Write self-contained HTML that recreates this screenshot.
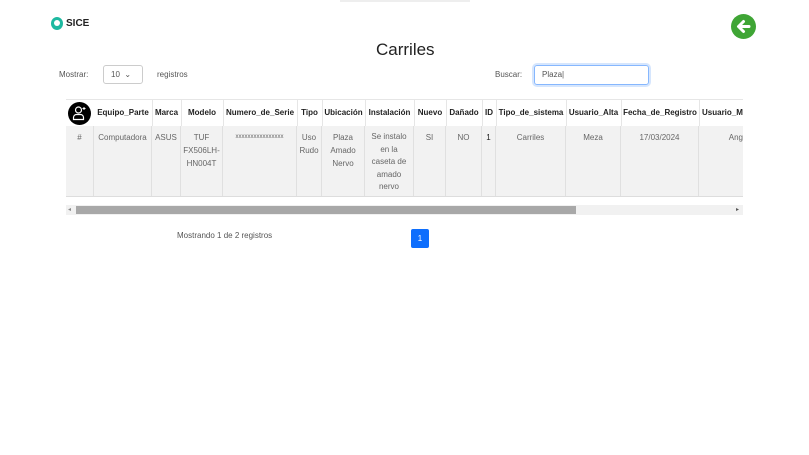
<!DOCTYPE html><html><head><style>
body{margin:0;width:809px;height:455px;background:#fff;font-family:"Liberation Sans",sans-serif;position:relative;overflow:hidden;color:#555}
.a{position:absolute}
.h{position:absolute;top:99px;height:27px;line-height:27px;font-weight:bold;font-size:8px;color:#222;text-align:center;white-space:nowrap;overflow:hidden;border-right:1px solid #e6e6e6}
.d{position:absolute;top:126px;height:70px;padding-top:5px;box-sizing:border-box;font-size:8px;line-height:13px;color:#666;text-align:center;background:#f2f2f2;border-right:1px solid #e0e0e0;overflow:hidden}
</style></head><body>
<div class="a" style="left:340px;top:0;width:130px;height:2px;background:#eee"></div>
<div class="a" style="left:51px;top:17px;width:12px;height:13px;border-radius:50%;background:#1db9a0"></div>
<div class="a" style="left:54px;top:20px;width:6px;height:6px;border-radius:50%;background:#fff"></div>
<div class="a" style="left:66px;top:18px;font-size:10px;font-weight:bold;color:#222">SICE</div>
<svg class="a" style="left:731px;top:14px" width="25" height="25" viewBox="0 0 25 25"><circle cx="12.5" cy="12.5" r="12.5" fill="#3fa535"/><path d="M18 12.5H8M12.5 7.5L7.5 12.5L12.5 17.5" stroke="#fff" stroke-width="3" fill="none" stroke-linecap="round" stroke-linejoin="round"/></svg>
<div class="a" style="left:376px;top:40px;font-size:17px;color:#222">Carriles</div>
<div class="a" style="left:59px;top:70px;font-size:8px">Mostrar:</div>
<div class="a" style="left:103px;top:65px;width:40px;height:19px;border:1px solid #ccc;border-radius:3px;box-sizing:border-box;font-size:8px;line-height:17px;padding-left:7px">10 &nbsp;⌄</div>
<div class="a" style="left:157px;top:70px;font-size:8px">registros</div>
<div class="a" style="left:495px;top:70px;font-size:8px">Buscar:</div>
<div class="a" style="left:534px;top:65px;width:115px;height:20px;border:1px solid #86b7fe;border-radius:3px;box-shadow:0 0 0 2px #d6e6fd;box-sizing:border-box;font-size:8px;line-height:18px;padding-left:7px">Plaza|</div>
<div class="a" style="left:66px;top:99px;width:677px;height:1px;background:#e6e6e6"></div>
<div class="a" style="left:66px;top:196px;width:677px;height:1px;background:#ddd"></div>
<svg class="a" style="left:68px;top:102px" width="23" height="23" viewBox="0 0 23 23"><circle cx="11.5" cy="11.5" r="11.5" fill="#000"/><circle cx="10.5" cy="8" r="3" stroke="#fff" stroke-width="1.2" fill="none"/><path d="M5.5 17.5v-2a3 3 0 0 1 3-3h4a3 3 0 0 1 3 3v2z" stroke="#fff" stroke-width="1.2" fill="none"/><path d="M16 5v3M14.5 6.5h3" stroke="#fff" stroke-width="1"/></svg>
<div class="h" style="left:94px;width:58px">Equipo_Parte</div>
<div class="h" style="left:152px;width:29px">Marca</div>
<div class="h" style="left:181px;width:42px">Modelo</div>
<div class="h" style="left:223px;width:74px">Numero_de_Serie</div>
<div class="h" style="left:297px;width:25px">Tipo</div>
<div class="h" style="left:322px;width:43px">Ubicación</div>
<div class="h" style="left:365px;width:49px">Instalación</div>
<div class="h" style="left:414px;width:32px">Nuevo</div>
<div class="h" style="left:446px;width:36px">Dañado</div>
<div class="h" style="left:482px;width:14px">ID</div>
<div class="h" style="left:496px;width:70px">Tipo_de_sistema</div>
<div class="h" style="left:566px;width:55px">Usuario_Alta</div>
<div class="h" style="left:621px;width:78px">Fecha_de_Registro</div>
<div class="h" style="left:699px;width:44px;text-align:left;padding-left:3px;border:0">Usuario_M</div>
<div class="d" style="left:66px;width:28px">#</div>
<div class="d" style="left:94px;width:58px">Computadora</div>
<div class="d" style="left:152px;width:29px">ASUS</div>
<div class="d" style="left:181px;width:42px">TUF FX506LH-HN004T</div>
<div class="d" style="left:223px;width:74px;font-size:6px">xxxxxxxxxxxxxxxx</div>
<div class="d" style="left:297px;width:25px">Uso Rudo</div>
<div class="d" style="left:322px;width:43px;padding-left:6px;padding-right:6px">Plaza Amado Nervo</div>
<div class="d" style="left:365px;width:49px;padding:5px 0 0;white-space:nowrap;line-height:12.5px">Se instalo<br>en la<br>caseta de<br>amado<br>nervo</div>
<div class="d" style="left:414px;width:32px">SI</div>
<div class="d" style="left:446px;width:36px">NO</div>
<div class="d" style="left:482px;width:14px;color:#222">1</div>
<div class="d" style="left:496px;width:70px">Carriles</div>
<div class="d" style="left:566px;width:55px">Meza</div>
<div class="d" style="left:621px;width:78px">17/03/2024</div>
<div class="d" style="left:699px;width:44px;text-align:right;border:0">Ang</div>
<div class="a" style="left:66px;top:205px;width:677px;height:10px;background:#f1f1f1"></div>
<div class="a" style="left:76px;top:206px;width:500px;height:8px;background:#a8a8a8"></div>
<div class="a" style="left:68px;top:206px;font-size:6px;color:#888">◂</div>
<div class="a" style="left:736px;top:206px;font-size:6px;color:#555">▸</div>
<div class="a" style="left:177px;top:231px;font-size:8px">Mostrando 1 de 2 registros</div>
<div class="a" style="left:411px;top:229px;width:18px;height:19px;background:#0d6efd;border-radius:2px;color:#fff;font-size:8px;line-height:19px;text-align:center">1</div>
</body></html>
